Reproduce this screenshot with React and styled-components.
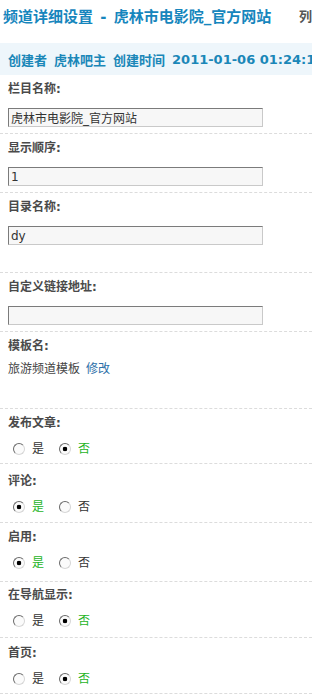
import React from "react";
import styled, { createGlobalStyle } from "styled-components";

const Global = createGlobalStyle`
  html, body { margin: 0; padding: 0; background: #fff; }
  body {
    font-family: "DejaVu Sans", "Noto Sans CJK SC", sans-serif;
    font-size: 12px;
    color: #333;
  }
`;

const Page = styled.div`
  width: 312px;
  overflow: hidden;
`;

const Header = styled.div`
  display: grid;
  grid-template-columns: 296px auto;
  height: 43px;
  box-sizing: border-box;
  padding: 8px 0 0 3px;
  white-space: nowrap;
  overflow: hidden;
`;

const Title = styled.h1`
  margin: 0;
  font-size: 15px;
  line-height: 18px;
  font-weight: bold;
  color: #1686bd;
  word-spacing: 2px;
`;

const SideTab = styled.span`
  font-size: 13px;
  line-height: 18px;
  font-weight: bold;
  color: #555;
`;

const Info = styled.div`
  display: flex;
  align-items: center;
  gap: 7px;
  height: 32px;
  padding-left: 8px;
  background: #eef6fb;
  color: #1a87b8;
  font-weight: bold;
  font-size: 13px;
  white-space: nowrap;
  overflow: hidden;
`;

const Row = styled.div`
  padding: ${(p) => p.$pt ?? 6}px 0 ${(p) => p.$pb ?? 6}px 8px;
  border-bottom: 1px dashed #dcdcdc;
`;

const Label = styled.div`
  font-weight: bold;
  color: #4a4a4a;
  font-size: 12px;
  line-height: 16px;
`;

const TextInput = styled.input`
  display: block;
  box-sizing: border-box;
  width: 255px;
  height: 19px;
  margin: 11px 0 0;
  padding: 0 2px;
  border: 1px solid;
  border-color: #7b7b7b #c9c9c9 #c9c9c9 #7b7b7b;
  background: #f7f7f7;
  font: 12px "DejaVu Sans", "Noto Sans CJK SC", sans-serif;
  color: #333;
  outline: none;
`;

const Plain = styled.div`
  margin-top: 7px;
  line-height: 16px;
  color: #444;
`;

const EditLink = styled.a`
  margin-left: 6px;
  color: #2d6fa8;
  text-decoration: none;
`;

const Choices = styled.div`
  display: flex;
  align-items: center;
  height: 20px;
  margin-top: 8px;
  padding-left: 5px;
`;

const Choice = styled.label`
  display: flex;
  align-items: center;
  gap: 7px;
  line-height: 16px;
  color: ${(p) => (p.$on ? "#1eb41e" : "#333")};
  & + & {
    margin-left: 15px;
  }
`;

const Radio = styled.input.attrs({ type: "radio" })`
  appearance: none;
  -webkit-appearance: none;
  margin: 0;
  width: 12px;
  height: 12px;
  box-sizing: border-box;
  border-radius: 50%;
  border: 1px solid;
  border-color: #6a6a6a #d6d6d6 #d6d6d6 #6a6a6a;
  background: #fbfbfb;
  &:checked {
    background: radial-gradient(circle, #000 0 2px, transparent 2.6px), #fbfbfb;
  }
`;

const fields = [
  { label: "栏目名称:", value: "虎林市电影院_官方网站" },
  { label: "显示顺序:", value: "1" },
  { label: "目录名称:", value: "dy", pb: 27 },
  { label: "自定义链接地址:", value: "" },
];

const toggles = [
  { name: "publish", label: "发布文章:", yes: false, pt: 6, pb: 4 },
  { name: "comment", label: "评论:", yes: true, pt: 9, pb: 5 },
  { name: "enable", label: "启用:", yes: true, pt: 6, pb: 8 },
  { name: "nav", label: "在导航显示:", yes: false, pt: 5, pb: 6 },
  { name: "home", label: "首页:", yes: false, pt: 7, pb: 4 },
];

export default function App() {
  return (
    <Page>
      <Global />
      <Header>
        <Title>频道详细设置 - 虎林市电影院_官方网站</Title>
        <SideTab>列</SideTab>
      </Header>
      <Info>
        <span>创建者</span>
        <span>虎林吧主</span>
        <span>创建时间</span>
        <span>2011-01-06 01:24:1</span>
      </Info>
      {fields.map((f) => (
        <Row key={f.label} $pb={f.pb}>
          <Label>{f.label}</Label>
          <TextInput defaultValue={f.value} readOnly />
        </Row>
      ))}
      <Row $pb={31}>
        <Label>模板名:</Label>
        <Plain>
          旅游频道模板<EditLink href="#">修改</EditLink>
        </Plain>
      </Row>
      {toggles.map((t) => (
        <Row key={t.name} $pt={t.pt} $pb={t.pb}>
          <Label>{t.label}</Label>
          <Choices>
            <Choice $on={t.yes}>
              <Radio name={t.name} defaultChecked={t.yes} />
              是
            </Choice>
            <Choice $on={!t.yes}>
              <Radio name={t.name} defaultChecked={!t.yes} />
              否
            </Choice>
          </Choices>
        </Row>
      ))}
    </Page>
  );
}
